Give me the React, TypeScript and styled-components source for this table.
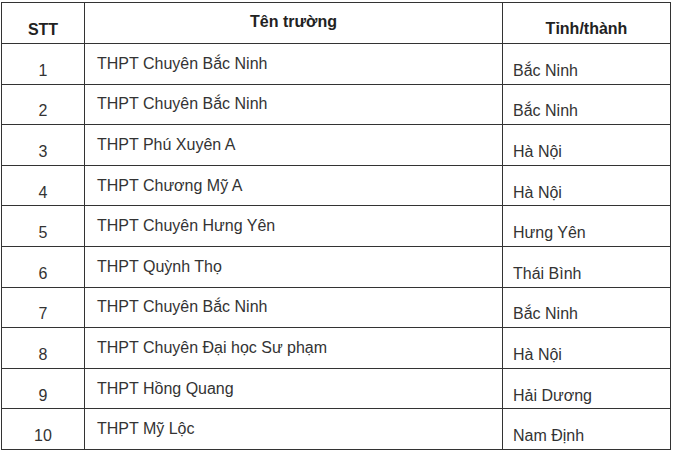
import React from 'react';
import styled, {createGlobalStyle} from 'styled-components';

const GlobalStyle = createGlobalStyle`
  html, body {
    margin: 0;
    padding: 0;
    background: #ffffff;
  }
  body {
    font-family: Arial, "Liberation Sans", sans-serif;
    color: #333333;
  }
`;

const Page = styled.div`
  padding: 2px 0 0 1px;
`;

const Table = styled.table`
  width: 669px;
  border-collapse: collapse;
  table-layout: fixed;
  font-size: 16px;
  > colgroup > col.stt { width: 83px; }
  > colgroup > col.name { width: 418px; }
  > colgroup > col.place { width: 168px; }
`;

const HeadCell = styled.th<{ $shift: number }>`
  height: 41px;
  box-sizing: border-box;
  border: 1px solid #333;
  padding: ${p => (p.$shift > 0 ? `${p.$shift * 2}px 0 0` : `0 0 ${-p.$shift * 2}px`)};
  vertical-align: middle;
  text-align: center;
  font-weight: bold;
  color: #222;
`;

const Row = styled.tr`
  height: 40.6px;
`;

const Cell = styled.td<{ $align?: 'left' | 'center'; $shift: number; $indent?: number }>`
  box-sizing: border-box;
  border: 1px solid #333;
  padding: ${p => (p.$shift > 0 ? `${p.$shift * 2}px` : '0')} 0 0 ${p => p.$indent ?? 0}px;
  vertical-align: middle;
  text-align: ${p => p.$align ?? 'left'};
  white-space: nowrap;
`;

const schools = [
    ['THPT Chuyên Bắc Ninh', 'Bắc Ninh'],
    ['THPT Chuyên Bắc Ninh', 'Bắc Ninh'],
    ['THPT Phú Xuyên A', 'Hà Nội'],
    ['THPT Chương Mỹ A', 'Hà Nội'],
    ['THPT Chuyên Hưng Yên', 'Hưng Yên'],
    ['THPT Quỳnh Thọ', 'Thái Bình'],
    ['THPT Chuyên Bắc Ninh', 'Bắc Ninh'],
    ['THPT Chuyên Đại học Sư phạm', 'Hà Nội'],
    ['THPT Hồng Quang', 'Hải Dương'],
    ['THPT Mỹ Lộc', 'Nam Định'],
];

export default function App() {
    return (
        <Page>
            <GlobalStyle/>
            <Table>
                <colgroup>
                    <col className="stt"/>
                    <col className="name"/>
                    <col className="place"/>
                </colgroup>
                <thead>
                <tr>
                    <HeadCell $shift={6.5}>STT</HeadCell>
                    <HeadCell $shift={-1.5}>Tên trường</HeadCell>
                    <HeadCell $shift={5.5}>Tỉnh/thành</HeadCell>
                </tr>
                </thead>
                <tbody>
                {schools.map(([name, place], i) => (
                    <Row key={i}>
                        <Cell $align="center" $shift={7}>{i + 1}</Cell>
                        <Cell $shift={0} $indent={12}>{name}</Cell>
                        <Cell $shift={7} $indent={10}>{place}</Cell>
                    </Row>
                ))}
                </tbody>
            </Table>
        </Page>
    );
}
